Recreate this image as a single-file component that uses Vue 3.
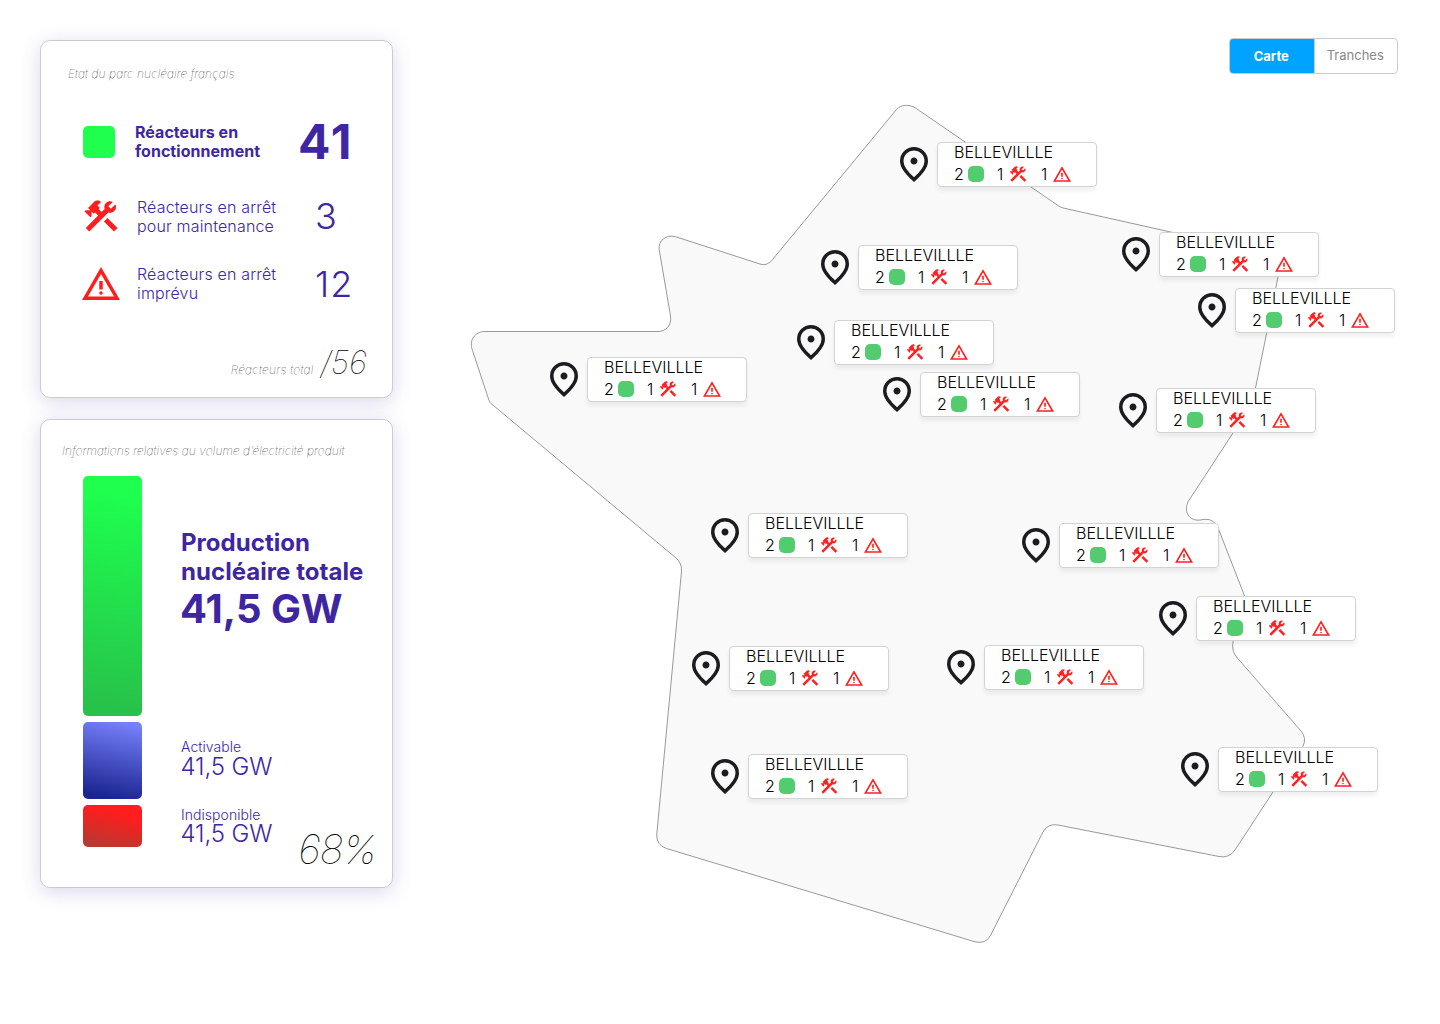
<script setup>
const sites = [
  [900, 142], [821, 245], [1122, 232], [1198, 288], [797, 320],
  [550, 357], [883, 372], [1119, 388], [711, 513], [1022, 523],
  [1159, 596], [692, 646], [947, 645], [711, 754], [1181, 747],
].map(([x, y]) => ({ x, y, name: 'BELLEVILLLE', running: 2, maintenance: 1, alert: 1 }))
</script>

<template>
  <svg class="defs" width="0" height="0" aria-hidden="true">
    <symbol id="tools" viewBox="0 0 24 24">
      <path d="M13.78 15.3 19.78 21.3 21.89 19.14 15.89 13.14zM17.5 10.1C17.11 10.1 16.69 10.05 16.36 9.91L4.97 21.25 2.86 19.14 10.27 11.74 8.5 9.96 7.78 10.66 6.33 9.25V12.11L5.63 12.81 2.11 9.25 2.81 8.55H5.62L4.22 7.14 7.78 3.58C8.95 2.41 10.83 2.41 12 3.58L9.89 5.74 11.3 7.14 10.59 7.85 12.38 9.63 14.2 7.75C14.06 7.42 14 7 14 6.63 14 4.66 15.56 3.11 17.5 3.11 18.09 3.11 18.61 3.25 19.08 3.53L16.41 6.2 17.91 7.7 20.58 5.03C20.86 5.5 21 6 21 6.63 21 8.55 19.45 10.1 17.5 10.1z" />
    </symbol>
    <symbol id="warning" viewBox="40 -880 880 760">
      <path d="m40-120 440-760 440 760H40Zm138-80h604L480-720 178-200Zm302-40q17 0 28.5-11.5T520-280q0-17-11.5-28.5T480-320q-17 0-28.5 11.5T440-280q0 17 11.5 28.500T480-240Zm-40-120h80v-200h-80v200Z" />
    </symbol>
    <symbol id="pin" viewBox="160 -880 640 800">
      <path d="M480-480q33 0 56.5-23.5T560-560q0-33-23.5-56.5T480-640q-33 0-56.5 23.5T400-560q0 33 23.5 56.5T480-480Zm0 294q122-112 181-203.5T720-552q0-109-69.5-178.5T480-800q-101 0-170.5 69.5T240-552q0 71 59 162.5T480-186Zm0 106Q319-217 239.5-334.5T160-552q0-150 96.5-239T480-880q127 0 223.5 89T800-552q0 100-79.5 217.5T480-80Z" />
    </symbol>
  </svg>

  <div class="page">
    <aside class="panels">
      <section class="card state">
        <h2 class="caption">Etat du parc nucléaire français</h2>
        <div class="row row-main">
          <span class="ico"><i class="square"></i></span>
          <span class="label">Réacteurs en<br />fonctionnement</span>
          <span class="num">41</span>
        </div>
        <div class="row row-maint">
          <span class="ico"><svg class="tools"><use href="#tools" /></svg></span>
          <span class="label">Réacteurs en arrêt<br />pour maintenance</span>
          <span class="num">3</span>
        </div>
        <div class="row">
          <span class="ico"><svg class="warning"><use href="#warning" /></svg></span>
          <span class="label">Réacteurs en arrêt<br />imprévu</span>
          <span class="num">12</span>
        </div>
        <div class="total">
          <span class="caption">Réacteurs total</span>
          <span class="total-num">/56</span>
        </div>
      </section>

      <section class="card volume">
        <h2 class="caption">Informations relatives au volume d’électricité produit</h2>
        <div class="body">
          <div class="bars">
            <div class="bar bar-on"></div>
            <div class="bar bar-ready"></div>
            <div class="bar bar-off"></div>
          </div>
          <div class="figures">
            <div class="prod">
              <p class="prod-title">Production<br />nucléaire totale</p>
              <p class="prod-num">41,5 GW</p>
            </div>
            <div class="fig">
              <p class="fig-title">Activable</p>
              <p class="fig-num">41,5 GW</p>
            </div>
            <div class="last">
              <div class="fig">
                <p class="fig-title">Indisponible</p>
                <p class="fig-num">41,5 GW</p>
              </div>
              <p class="percent">68%</p>
            </div>
          </div>
        </div>
      </section>
    </aside>

    <main class="map">
      <svg class="france" width="1440" height="1024" viewBox="0 0 1440 1024">
        <path d="M896.5 109.5C901 104.500 909 104 915.500 108L1058 205.500Q1061 207.500 1064 208.200L1258 251.500Q1281 256 1278 277L1255.500 388Q1252 405 1233 433L1188.500 501C1183 511 1189 521.500 1200 520L1205 519.300Q1214 518.500 1218.500 529L1245 597Q1251 614 1239 629C1231 640 1231 650 1236.500 657L1301 731Q1307 738.500 1303 746L1273 792L1235 850Q1229 858.500 1219 856.500L1058 825Q1048 823 1043 832L990.500 935.500Q985.500 944.500 975 941.800L666.500 848.500Q656 845 656.800 834L681.500 571.500Q682 563 676 558L491 403.500Q489.500 402 489 400.500L472.500 350.500C468.500 340 475 331.500 485 331.500H658C666 331.500 672 325 670.500 316L659.200 249.500C658 241 666 234 675.500 236.700L760 264Q766.500 266.200 771.500 260.800Z" />
      </svg>

      <div v-for="(s, i) in sites" :key="i" class="site" :style="{ left: s.x + 'px', top: s.y + 'px' }">
        <svg class="pin"><use href="#pin" /></svg>
        <div class="tag">
          <div class="name">{{ s.name }}</div>
          <div class="counts">
            <span class="c1">{{ s.running }}</span><i class="dot"></i>
            <span class="c2">{{ s.maintenance }}</span><svg class="tools"><use href="#tools" /></svg>
            <span class="c3">{{ s.alert }}</span><svg class="warning"><use href="#warning" /></svg>
          </div>
        </div>
      </div>
    </main>

    <nav class="toggle">
      <button class="on">Carte</button>
      <button class="off">Tranches</button>
    </nav>
  </div>
</template>

<style>
body { background: #fff; }
</style>

<style scoped>
.defs { position: absolute; }
.page {
  position: relative;
  display: flex;
  justify-content: space-between;
  align-items: flex-start;
  width: 1440px;
  height: 1024px;
  overflow: hidden;
  box-sizing: border-box;
  padding: 38px 42px 0 40px;
  background: #fff;
  font-family: Inter, "Liberation Sans", sans-serif;
  font-optical-sizing: none;
}
p, h2 { margin: 0; }
svg { display: block; flex: none; }

.panels { display: flex; flex-direction: column; gap: 21px; width: 353px; padding-top: 2px; }
.card {
  box-sizing: border-box;
  width: 353px;
  border: 1px solid #ccc;
  border-radius: 10px;
  background: #fff;
  box-shadow: 0 4px 20px rgba(62, 38, 162, 0.19);
  color: #3e26a2;
}
.caption { font-size: 12px; line-height: 15px; font-weight: 100; font-style: italic; letter-spacing: 0.08px; color: #000; white-space: nowrap; }

.state { height: 358px; padding: 25px 25px 0 27px; }
.row { display: grid; grid-template-columns: 69px 178px auto; align-items: center; height: 44px; margin-top: 24px; font-weight: 300; }
.row-main { grid-template-columns: 67px 163px auto; height: 58px; margin: 32px 0 -1px; font-weight: 700; }
.row-maint .label { padding-top: 2px; }
.ico { display: flex; justify-content: center; width: 38px; margin-left: 14px; }
.row-main .ico { width: 34px; }
.square { width: 32px; height: 32px; border-radius: 5px; background: #1eff4e; }
.ico .tools { width: 40px; height: 40px; margin: 0 -1px; fill: #ff1d1d; }
.ico .warning { width: 38px; height: 33px; margin-bottom: 2px; fill: #ff1d1d; }
.label { font-size: 16px; line-height: 19px; letter-spacing: 0.16px; white-space: nowrap; }
.row-main .label { letter-spacing: 0.04px; }
.num { font-size: 36px; line-height: 44px; font-weight: 350; letter-spacing: 1px; }
.row-main .num { font-size: 48px; line-height: 58px; font-weight: 700; letter-spacing: 2px; }
.total { display: flex; justify-content: flex-end; align-items: baseline; gap: 7px; margin-top: 37px; }
.total .caption { letter-spacing: 0.25px; }
.total-num { font-size: 32px; line-height: 39px; font-weight: 100; font-style: italic; color: #000; }

.volume { height: 469px; padding: 23px 16px 0 21px; }
.body { display: flex; gap: 39px; margin: 18px 0 0 21px; }
.bars { display: flex; flex-direction: column; gap: 6px; width: 59px; flex: none; }
.bar { border-radius: 5px; }
.bar-on { height: 240px; background: linear-gradient(187deg, #1eff4e 8%, #27c24a 95%); }
.bar-ready { height: 77px; background: linear-gradient(192deg, #7580fa 5%, #1b2592 92%); }
.bar-off { height: 42px; background: linear-gradient(195deg, #ff1d1d 25%, #b53a31 95%); }
.figures { flex: 1; padding-top: 52px; white-space: nowrap; }
.prod { height: 210px; font-weight: 700; }
.prod-title { font-size: 24px; line-height: 29px; letter-spacing: 0.05px; }
.prod-num { font-size: 40px; line-height: 48px; margin: -1px 0 0 -1px; }
.fig { height: 68px; font-weight: 300; }
.fig-title { font-size: 14px; line-height: 17px; letter-spacing: 0.05px; }
.fig-num { font-size: 24px; line-height: 23px; font-weight: 350; letter-spacing: -0.1px; margin-left: -0.5px; }
.last .fig-num { margin-top: -1px; }
.last { display: flex; justify-content: space-between; }
.percent { font-size: 40px; line-height: 48px; font-weight: 100; font-style: italic; letter-spacing: -0.8px; color: #000; margin-top: 20px; }

.map { position: absolute; inset: 0; }
.france path { fill: #f9f9f9; stroke: #999; stroke-width: 1; }
.site { position: absolute; display: flex; align-items: flex-start; gap: 9px; }
.pin { width: 28px; height: 35px; margin-top: 5px; fill: #1c1b1f; }
.tag {
  box-sizing: border-box;
  width: 160px;
  height: 45px;
  padding: 0 0 0 16px;
  border: 1px solid #d3d3d3;
  border-radius: 4px;
  background: #fff;
  box-shadow: 0 4px 4px rgba(0, 0, 0, 0.06);
  color: #000;
}
.name { font-size: 16px; line-height: 18px; height: 22px; font-weight: 350; }
.counts { display: flex; align-items: center; height: 18px; font-size: 16px; line-height: 18px; font-weight: 350; }
.c1 { width: 14px; }
.dot { width: 16px; height: 16px; border-radius: 5px; background: #53cb6f; }
.c2 { width: 11px; margin-left: 13px; }
.counts .tools { width: 20px; height: 20px; fill: #ff2020; }
.c3 { width: 11.5px; margin-left: 13px; }
.counts .warning { width: 18px; height: 16px; fill: #ff2020; }

.toggle { position: relative; display: flex; box-sizing: border-box; width: 169px; height: 36px; border: 1px solid #ccc; border-radius: 4px; overflow: hidden; background: #fff; }
.toggle button { border: 0; padding: 0; font: 400 13px/16px Inter, "Liberation Sans", sans-serif; background: none; }
.toggle .on { width: 84.5px; padding-right: 1px; background: #00a3ff; color: #fff; font-weight: 700; border-right: 1px solid #ccc; }
.toggle .off { flex: 1; color: #888; padding: 0 1px 2px 0; }
</style>
